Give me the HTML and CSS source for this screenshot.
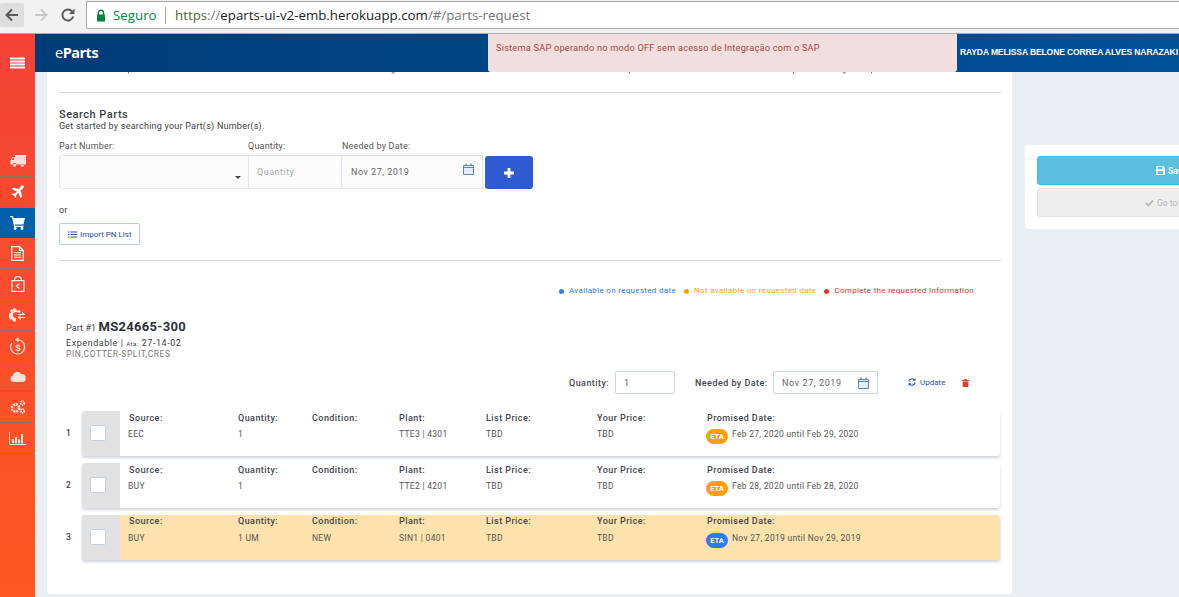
FILE: index.html
```html
<!DOCTYPE html>
<html lang="pt">
<head>
<meta charset="utf-8">
<title>eParts</title>
<link rel="stylesheet" href="styles.css">
</head>
<body>
<div class="chrome">
  <div class="nav-btn back"><svg width="16" height="16" viewBox="0 0 16 16"><path d="M14 8H3M8 2.5 2.5 8 8 13.5" fill="none" stroke="#5a5a5a" stroke-width="2"/></svg></div>
  <div class="nav-btn fwd"><svg width="16" height="16" viewBox="0 0 16 16"><path d="M2 8h11M8 2.5 13.5 8 8 13.5" fill="none" stroke="#c8c8c8" stroke-width="2"/></svg></div>
  <div class="nav-btn reload"><svg width="16" height="16" viewBox="0 0 16 16"><path d="M13.2 9.5a5.5 5.5 0 1 1-1.2-5.2" fill="none" stroke="#5a5a5a" stroke-width="1.9"/><path d="M14.5 1.5v5.6H8.9z" fill="#5a5a5a"/></svg></div>
  <div class="urlbar">
    <svg class="lock" width="10" height="13" viewBox="0 0 10 13"><path d="M2.5 6V3.8a2.5 2.5 0 0 1 5 0V6" fill="none" stroke="#0b8043" stroke-width="1.4"/><rect x="1" y="5.5" width="8" height="7" fill="#0b8043"/></svg>
    <span class="secure">Seguro</span><span class="url-sep"></span>
    <span class="url"><span class="u-https">https</span><span class="u-dim">://</span><span class="u-host">eparts-ui-v2-emb.herokuapp.com</span><span class="u-dim">/#/parts-request</span></span>
  </div>
</div>
<div class="app">
  <aside class="sidebar">
    <div class="burger"><svg width="15" height="12" viewBox="0 0 15 12"><path d="M0 .5h15v2H0zM0 3.5h15v2H0zM0 6.5h15v2H0zM0 9.5h15v2H0z" fill="#fff"/></svg></div>
    <ul class="side-list">
      <li class="side-item"><svg width="16" height="12" viewBox="0 0 16 12"><path d="M5 0h11v9.500H6.500a2 2 0 0 0-3.800 0H.5V5l2-3H5zM1.700 5H4.200V2.800H3zM4.600 8.700a1.600 1.600 0 1 1 0 3.200 1.600 1.600 0 0 1 0-3.200zM12.200 8.700a1.600 1.600 0 1 1 0 3.200 1.600 1.600 0 0 1 0-3.200z" fill="#fbe3dc" fill-rule="evenodd"/></svg></li>
      <li class="side-item"><svg width="13" height="13" viewBox="0 0 13 13"><path d="M12.300.7c.8.800.4 2-.4 2.800L9.700 5.700l1.300 6-1.300 1.300-2.500-5-2.200 2.200.3 1.900-1 1-1.100-2.500L.7 9.500l1-1 1.900.3 2.200-2.200-5-2.500 1.300-1.300 6 1.300L10.300.4c.6-.4 1.500-.2 2 .3z" fill="#fff"/></svg></li>
      <li class="side-item active"><svg width="15" height="14" viewBox="0 0 15 14"><path d="M0 0h3l.5 2H15l-1.600 6.500H5l.3 1.300h8.200v1.200H4.200L2 1.200H0z" fill="#fff"/><circle cx="5.200" cy="12.500" r="1.400" fill="#fff"/><circle cx="12" cy="12.500" r="1.400" fill="#fff"/></svg></li>
      <li class="side-item"><svg width="13" height="15" viewBox="0 0 13 15"><path d="M.7.700h7.800l3.800 3.800v9.800H.7z" fill="none" stroke="#fff" stroke-width="1.300"/><path d="M8.500.700v3.800h3.800M3 6.800h7M3 9h7M3 11.200h7" fill="none" stroke="#fff" stroke-width="1.100"/></svg></li>
      <li class="side-item"><svg width="14" height="16" viewBox="0 0 14 16"><path d="M1 4.700h12v10.600H1zM3.800 4.700V3a3.200 2.300 0 0 1 6.400 0v1.700" fill="none" stroke="#fbe3dc" stroke-width="1.300"/><path d="M8.500 7.500 5.500 10l3 2.500" fill="none" stroke="#fbe3dc" stroke-width="1.300"/></svg></li>
      <li class="side-item"><svg width="17" height="14" viewBox="0 0 17 14"><path d="M4 .5h3l.4 1.600 1.300.6 1.400-.8 1.700 1.700-.5.900H8.500A3 3 0 1 0 7 10v3.500H4l-.4-1.600-1.200-.6-1.500.8L0 9.200V5.500l1.500-.2.300-1.200L1 2.700 2.600 1l1.200.7z" fill="#fbe3dc"/><path d="M9 6.500h6.500M13 4.500l2.500 2M9.500 9.500H16M12 7.700 9.500 9.500 12 11.500" fill="none" stroke="#fbe3dc" stroke-width="1.200"/></svg></li>
      <li class="side-item"><svg width="16" height="18" viewBox="0 0 16 18"><path d="M5.500 3.300A7 7 0 1 1 2 5.800" fill="none" stroke="#fbe3dc" stroke-width="1.200"/><path d="M8.500 0v5L5 2.700z" fill="#fbe3dc"/><text class="dollar" x="8" y="14" text-anchor="middle">$</text></svg></li>
      <li class="side-item"><svg width="16" height="11" viewBox="0 0 16 11"><path d="M3.500 11A3.300 3.300 0 0 1 3 4.500 4.300 4.300 0 0 1 11 3a3.600 3.600 0 0 1 1.300 8z" fill="#fbe3dc"/></svg></li>
      <li class="side-item"><svg width="16" height="14" viewBox="0 0 16 14"><circle cx="5.500" cy="8" r="3.600" fill="none" stroke="#fbe3dc" stroke-width="2.600" stroke-dasharray="2 .8"/><circle cx="12.500" cy="3" r="1.800" fill="none" stroke="#fbe3dc" stroke-width="1.700" stroke-dasharray="1.300 .6"/><circle cx="12.500" cy="11" r="1.800" fill="none" stroke="#fbe3dc" stroke-width="1.700" stroke-dasharray="1.300 .6"/></svg></li>
      <li class="side-item"><svg width="17" height="13" viewBox="0 0 17 13"><path d="M.5 0v12.500H17" fill="none" stroke="#fbe3dc" stroke-width="1"/><path d="M3 7h2v4.500H3zM6 5h2v6.500H6zM9 7.500h2v4H9zM12 2h2v9.500h-2z" fill="#fbe3dc"/></svg></li>
    </ul>
  </aside>
  <div class="main">
    <header class="topbar">
      <div class="brand"><span class="brand-e">e</span>Parts</div>
      <div class="user">RAYDA MELISSA BELONE CORREA ALVES NARAZAKI</div>
      <div class="alert">Sistema SAP operando no modo OFF sem acesso de Integração com o SAP</div>
    </header>
    <div class="content">
      <section class="card">
        <svg class="clip-marks" width="965" height="3" viewBox="0 0 965 3"><path d="M81.500 0v1.500M345 0a1.200 1.200 0 0 0 2.400 0M582.500 0v1.500M746 0l.8 2M796 0a1.200 1.200 0 0 0 2.400 0M824.500 0v1.500" fill="none" stroke="#777" stroke-width="1"/></svg>
        <hr class="rule first">
        <h2 class="search-title">Search Parts</h2>
        <p class="search-sub">Get started by searching your Part(s) Number(s).</p>
        <div class="field-labels"><span class="fl-part">Part Number:</span><span class="fl-qty">Quantity:</span><span>Needed by Date:</span></div>
        <div class="search-row">
          <div class="search-group">
            <div class="sg part"><span class="caret"></span></div>
            <div class="sg qty">Quantity</div>
            <div class="sg date">Nov 27, 2019
              <svg class="cal" width="11" height="12" viewBox="0 0 11 12"><path d="M.5 2.500h10v9H.5zM.5 4.500h10" fill="#e7eef7" stroke="#5b87b5"/><path d="M3 .5v2.500M8 .5v2.500" stroke="#5b87b5" stroke-width="1.300"/></svg>
            </div>
          </div>
          <button class="plus" type="button"><svg width="10" height="10" viewBox="0 0 10 10"><path d="M3.600 0h2.800v3.600H10v2.800H6.400V10H3.600V6.400H0V3.600h3.600z" fill="#fff"/></svg></button>
        </div>
        <p class="or">or</p>
        <button class="import" type="button"><svg width="9" height="7" viewBox="0 0 9 7"><path d="M0 .5h1.500v1H0zM2.500 .5H9v1H2.500zM0 3h1.500v1H0zM2.500 3H9v1H2.500zM0 5.500h1.500v1H0zM2.500 5.500H9v1H2.500z" fill="#2a4f9a"/></svg>Import PN List</button>
        <hr class="rule second">
        <div class="legend">
          <span class="lg blue">Available on requested date</span>
          <span class="lg orange">Not available on requested date</span>
          <span class="lg red">Complete the requested Information</span>
        </div>
        <div class="part-head">
          <div class="part-title"><span class="part-no">Part #1</span> <strong>MS24665-300</strong></div>
          <div class="part-meta">Expendable | <small>Ata:</small> 27-14-02</div>
          <div class="part-desc">PIN,COTTER-SPLIT,CRES</div>
        </div>
        <div class="part-controls">
          <label class="pc-label pc-q">Quantity:</label>
          <div class="pc-input pc-qty">1</div>
          <label class="pc-label pc-n">Needed by Date:</label>
          <div class="pc-input pc-date">Nov 27, 2019
            <svg class="cal2" width="11" height="12" viewBox="0 0 11 12"><path d="M.5 2.500h10v9H.5zM.5 4.500h10" fill="#e7eef7" stroke="#5b87b5"/><path d="M3 .5v2.500M8 .5v2.500" stroke="#5b87b5" stroke-width="1.300"/></svg>
          </div>
          <span class="update"><svg width="8" height="8" viewBox="0 0 8 8"><path d="M.8 3.500A3.200 3.200 0 0 1 6.300 1.800M7.200 4.500A3.200 3.200 0 0 1 1.700 6.200" fill="none" stroke="#2a4f9a" stroke-width="1.100"/><path d="M7.500 0v2.800H4.700zM.5 8V5.200h2.800z" fill="#2a4f9a"/></svg>Update</span>
          <svg class="trash" width="7" height="8" viewBox="0 0 7 8"><path d="M0 1h2.300V0h2.400v1H7v1H0zM.7 2.500h5.600V8H.7z" fill="#e53935"/></svg>
        </div>
        <div class="rows">
          <div class="row-wrap">
            <span class="row-no">1</span>
            <div class="row">
              <div class="check"><span class="box"></span></div>
              <div class="col"><b>Source:</b><span>EEC</span></div>
              <div class="col"><b>Quantity:</b><span>1</span></div>
              <div class="col"><b>Condition:</b><span></span></div>
              <div class="col"><b>Plant:</b><span>TTE3 | 4301</span></div>
              <div class="col"><b>List Price:</b><span>TBD</span></div>
              <div class="col"><b>Your Price:</b><span>TBD</span></div>
              <div class="col"><b>Promised Date:</b><span class="promised"><i class="eta orange-bg">ETA</i>Feb 27, 2020 until Feb 29, 2020</span></div>
            </div>
          </div>
          <div class="row-wrap">
            <span class="row-no">2</span>
            <div class="row">
              <div class="check"><span class="box"></span></div>
              <div class="col"><b>Source:</b><span>BUY</span></div>
              <div class="col"><b>Quantity:</b><span>1</span></div>
              <div class="col"><b>Condition:</b><span></span></div>
              <div class="col"><b>Plant:</b><span>TTE2 | 4201</span></div>
              <div class="col"><b>List Price:</b><span>TBD</span></div>
              <div class="col"><b>Your Price:</b><span>TBD</span></div>
              <div class="col"><b>Promised Date:</b><span class="promised"><i class="eta orange-bg">ETA</i>Feb 28, 2020 until Feb 28, 2020</span></div>
            </div>
          </div>
          <div class="row-wrap">
            <span class="row-no">3</span>
            <div class="row selected">
              <div class="check"><span class="box"></span></div>
              <div class="col"><b>Source:</b><span>BUY</span></div>
              <div class="col"><b>Quantity:</b><span>1 UM</span></div>
              <div class="col"><b>Condition:</b><span>NEW</span></div>
              <div class="col"><b>Plant:</b><span>SIN1 | 0401</span></div>
              <div class="col"><b>List Price:</b><span>TBD</span></div>
              <div class="col"><b>Your Price:</b><span>TBD</span></div>
              <div class="col"><b>Promised Date:</b><span class="promised"><i class="eta blue-bg">ETA</i>Nov 27, 2019 until Nov 29, 2019</span></div>
            </div>
          </div>
        </div>
      </section>
      <aside class="side-card">
        <button class="act save" type="button"><svg width="9" height="9" viewBox="0 0 9 9"><path d="M0 0h7l2 2v7H0zM2 .8v2.400h4.500V.8zM2 5v3.200h5V5z" fill="#fff" fill-rule="evenodd"/></svg>Save</button>
        <button class="act goto" type="button"><svg width="9" height="8" viewBox="0 0 9 8"><path d="M1 4l2.500 2.500L8 1.500" fill="none" stroke="#b5b5b5" stroke-width="1.800"/></svg>Go to Checkout</button>
      </aside>
    </div>
  </div>
</div>
</body>
</html>
```
FILE: styles.css
```css
* { box-sizing: border-box; }
html, body { margin: 0; padding: 0; height: 597px; overflow: hidden; }
body { font-family: Roboto, "Liberation Sans", Arial, sans-serif; font-size: 9px; color: #3c4043; background: #eaeff4; width: 1179px; }
p, h2, ul { margin: 0; padding: 0; }

.chrome { height: 34px; background: #f2f2f2; display: flex; align-items: flex-start; border-bottom: 1px solid #a9a9a9; }
.nav-btn { height: 24px; margin-top: 3px; display: flex; align-items: center; justify-content: center; }
.back { width: 24px; background: #dedede; border-radius: 2px; }
.fwd { width: 22px; margin-left: 6px; }
.reload { width: 22px; margin-left: 5px; margin-right: 7px; }
.urlbar { flex: 1; height: 28px; margin-top: 1px; background: #fff; border: 1px solid #a9a9a9; border-right: 0; border-radius: 2px 0 0 2px; display: flex; align-items: center; padding-left: 9px; font-family: "Open Sans", Roboto, sans-serif; font-size: 13.300px; }
.lock { margin-right: 7px; }
.secure { color: #0b8043; width: 45px; }
.url-sep { width: 1px; height: 17px; background: #a9a9a9; margin: 0 9px 0 7px; }
.url { color: #777; white-space: nowrap; }
.u-https { color: #4a6a35; }
.u-dim { color: #777; }
.u-host { color: #222; }

.app { display: flex; height: 563px; }
.sidebar { width: 35px; flex: none; background: linear-gradient(#f44336, #ff5722); }
.burger { height: 112px; padding-top: 23px; display: flex; justify-content: center; align-items: flex-start; }
.side-list { list-style: none; }
.side-item { height: 30.800px; border-bottom: 1px solid #a56a5f; display: flex; align-items: center; justify-content: center; }
.side-item.active { background: #0061a8; border-bottom: 0; }

.main { flex: 1; min-width: 0; display: flex; flex-direction: column; }
.topbar { height: 38px; flex: none; background: linear-gradient(90deg, #003c78, #015199); display: flex; align-items: center; justify-content: space-between; position: relative; overflow: hidden; color: #fff; }
.brand { margin: -2px 0 0 20px; font-size: 14.500px; font-weight: 700; font-family: "Open Sans", sans-serif; color: #fff; letter-spacing: -.5px; }
.brand-e { font-weight: 400; }
.user { position: absolute; left: 925px; top: 13px; font-family: "Liberation Sans", Arial, sans-serif; font-weight: 700; font-size: 8.500px; white-space: nowrap; letter-spacing: -.1px; }
.alert { position: absolute; left: 453px; top: 0; width: 469px; height: 38px; background: #f2dede; color: #a94442; border-radius: 0 0 3px 3px; padding: 8px 8px; font-size: 9.200px; letter-spacing: .23px; }

.content { flex: 1; display: flex; align-items: flex-start; padding-left: 12px; min-height: 0; }
.card { width: 965px; height: 522px; flex: none; background: #fff; border-radius: 0 0 4px 4px; padding: 0 12px; position: relative; }
.clip-marks { position: absolute; left: 0; top: 0; }
.rule { border: 0; border-top: 1px solid #d9d9d9; margin: 0; width: 942px; }
.rule.first { margin-top: 20px; }
.search-title { font-size: 11px; font-weight: 500; letter-spacing: .5px; color: #3a3f45; margin-top: 16px; line-height: 12px; }
.search-sub { font-size: 9px; line-height: 11px; letter-spacing: .23px; }
.field-labels { display: flex; margin-top: 9px; line-height: 11px; font-size: 9px; letter-spacing: .2px; color: #555; }
.fl-part { width: 189px; }
.fl-qty { width: 94px; }
.search-row { display: flex; margin-top: 3px; }
.search-group { display: flex; width: 424px; height: 34px; background: #fcfcfc; border: 1px solid #e3e6ea; border-top-color: #dfe3ea; border-radius: 3px 0 0 3px; }
.sg { height: 100%; display: flex; align-items: center; font-size: 9px; letter-spacing: .5px; }
.part { width: 189px; border-right: 1px solid #e3e6ea; position: relative; }
.caret { position: absolute; right: 7px; bottom: 9px; border: 3px solid transparent; border-top-color: #444; border-bottom: 0; }
.qty { width: 93px; padding-left: 8px; color: #a8a8a8; border-right: 1px solid #e3e6ea; }
.date { flex: 1; padding-left: 9px; color: #666; position: relative; }
.cal { position: absolute; right: 8px; top: 7px; }
.plus { width: 48px; height: 33px; margin: 1px 0 0 2px; background: #2f5bd3; border: 0; border-radius: 3px; padding: 0; display: flex; align-items: center; justify-content: center; }
.or { margin-top: 16px; line-height: 10px; font-size: 9px; letter-spacing: .2px; }
.import { display: flex; align-items: center; gap: 3px; width: 81px; height: 22px; margin-top: 8px; padding: 0 0 0 8px; background: #fff; border: 1px solid #b8cdec; border-radius: 2px; color: #2a4f9a; font-family: inherit; font-size: 8px; white-space: nowrap; }
.rule.second { margin-top: 15px; }
.legend { display: flex; justify-content: flex-end; gap: 8px; width: 915px; margin-top: 25px; line-height: 10px; font-size: 8px; letter-spacing: .32px; }
.lg { display: flex; align-items: center; gap: 5px; }
.lg::before { content: ""; width: 5px; height: 5px; border-radius: 50%; background: currentColor; }
.blue { color: #2f7bf0; }
.orange { color: #ff9f0a; }
.red { color: #e53027; }
.part-head { margin: 23px 0 0 7px; }
.part-title { line-height: 15px; }
.part-no { font-size: 9px; letter-spacing: .1px; }
.part-title strong { font-size: 13px; font-weight: 700; color: #2b3038; letter-spacing: .3px; }
.part-meta { font-size: 9px; line-height: 11px; letter-spacing: .55px; margin-top: 2px; }
.part-meta small { font-size: 6px; }
.part-desc { font-size: 8.500px; line-height: 11px; letter-spacing: .55px; color: #777; }
.part-controls { display: flex; align-items: center; height: 23px; margin-top: 11px; padding-left: 510px; }
.pc-label { font-size: 9px; font-weight: 500; letter-spacing: .45px; color: #42464c; }
.pc-q { width: 46px; }
.pc-n { width: 78px; }
.pc-input { height: 23px; background: #fff; border: 1px solid #ccd8e6; border-radius: 2px; display: flex; align-items: center; font-size: 9px; letter-spacing: .6px; color: #666; padding-left: 8px; }
.pc-qty { width: 60px; margin-right: 20px; }
.pc-date { width: 105px; position: relative; margin-right: 30px; }
.cal2 { position: absolute; right: 8px; top: 5px; }
.update { display: flex; align-items: center; gap: 4px; font-size: 8px; color: #2a4f9a; width: 54px; margin-top: -1px; }
.trash { display: block; }
.rows { margin-top: 17px; display: flex; flex-direction: column; gap: 7.500px; }
.row-wrap { display: flex; align-items: center; padding-left: 7px; }
.row-no { width: 16px; font-size: 8.500px; font-weight: 500; color: #444; }
.row { width: 918px; height: 44.500px; background: #fff; border-radius: 3px; box-shadow: 0 2px 3px rgba(90,100,120,.28); display: grid; grid-template-columns: 38px 118px 74px 87px 87px 111px 110px 1fr; overflow: hidden; }
.row.selected { background: #fde2ae; }
.check { background: #e1e1e1; display: flex; align-items: center; padding-left: 8px; }
.box { width: 16px; height: 16px; background: #fff; border: 1px solid #c4d0e0; border-radius: 2px; }
.col { padding-top: 2px; font-size: 8.500px; letter-spacing: .3px; }
.col:nth-child(2) { padding-left: 8px; }
.col b { display: block; font-weight: 500; font-size: 9px; letter-spacing: .45px; color: #42464c; line-height: 11px; margin: 0 0 5px 1px; }
.col:not(:nth-child(2)) b { margin-left: 0; }
.selected .col b { margin-top: -1px; margin-bottom: 6px; }
.col span { display: block; line-height: 11px; color: #555; }
.col .promised { color: #555; position: relative; padding-left: 25px; white-space: nowrap; }
.eta { position: absolute; left: -1px; top: 0; width: 22px; height: 15px; border-radius: 8px; color: #fff; font-style: normal; font-weight: 700; font-size: 7.500px; line-height: 15px; text-align: center; letter-spacing: 0; }
.orange-bg { background: #ff9f0a; }
.blue-bg { background: #2f7bf0; }

.side-card { width: 200px; flex: none; height: 84px; margin: 73px 0 0 13px; background: #fff; border-radius: 4px; padding: 11px 12px; display: flex; flex-direction: column; gap: 3px; }
.act { height: 29px; width: 180px; flex: none; border-radius: 3px; display: flex; align-items: center; gap: 3px; font-family: inherit; font-size: 8.500px; white-space: nowrap; }
.save { background: #5bc0de; border: 1px solid #46b8da; color: #fff; font-weight: 700; padding: 0 0 0 118px; }
.goto { background: #eee; border: 1px solid #e4e4e4; color: #b5b5b5; padding: 0 0 0 107px; }
.dollar { font-family: "Liberation Sans", sans-serif; font-size: 9px; font-weight: 700; fill: #fbe3dc; }
```
